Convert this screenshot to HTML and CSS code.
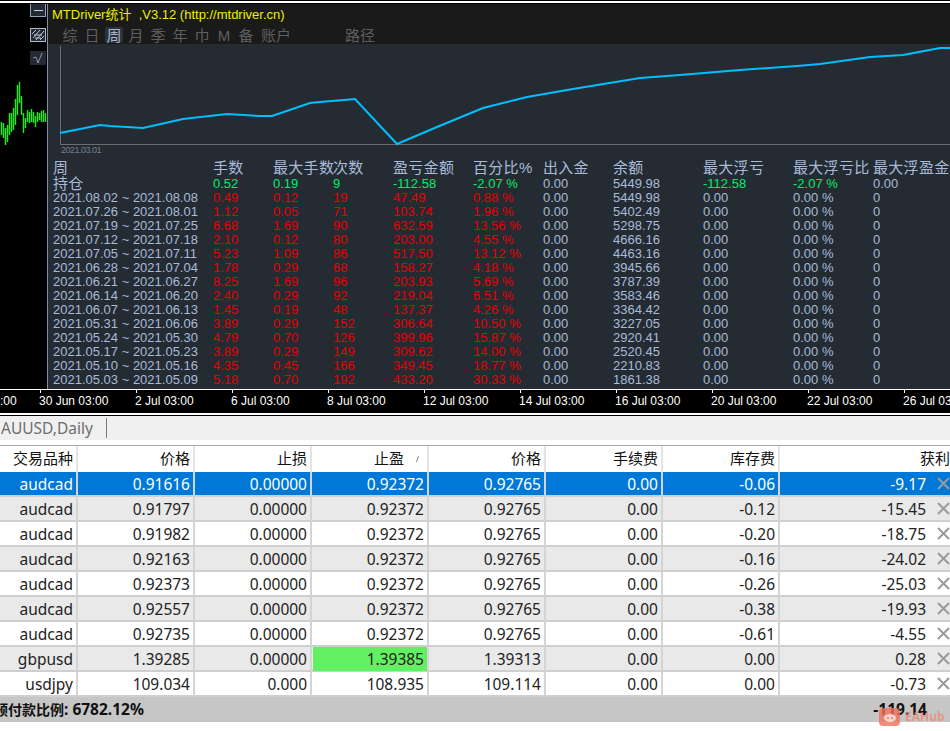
FILE: index.html
```html
<!DOCTYPE html>
<html>
<head lang="en">
    <meta charset="UTF-8">
    <title>MTDriver</title>
    <link rel="stylesheet" href="styles.css">
</head>
<body>
<div class="top-rule"></div>
<div class="terminal">
    <div class="side">
        <div class="side-btn side-min"><span></span></div>
        <div class="side-btn side-hatch">
            <svg width="14" height="12" viewBox="0 0 14 12"><path d="M2 9 9 1M5 11 13 2M1 5 5 1M9 11 13 7M3 6 11 6M4 9 10 9" stroke="#c4ccd6" stroke-width="1" fill="none"/></svg>
        </div>
        <div class="side-btn side-check">
            <svg width="12" height="12" viewBox="0 0 12 12"><path d="M1 6 4 5 6 11 10 1" stroke="#8a93a0" stroke-width="1" fill="none"/></svg>
        </div>
        <svg class="spark" width="47" height="70" viewBox="0 0 47 70">
            <path d="M1.5 40V53M3.5 41V56M5.5 46V63M7.5 43V60M9.5 31V53M11.5 31V50M13.5 26V48M15.5 17V43M17.5 3V33M19.5 0V21M21.5 14V33M23.5 31V51M25.5 36V46M27.5 28V40M29.5 30V41M31.5 27V40M33.5 30V41M35.5 34V45M37.5 30V40M39.5 31V38M41.5 29V40M43.5 28V40M45.5 31V40" stroke="#00ff00" stroke-width="1.4" fill="none"/>
        </svg>
    </div>
    <div class="panel">
        <div class="panel-head">
            <div class="panel-title">MTDriver统计 &nbsp;,V3.12 (http://mtdriver.cn)</div>
            <div class="tabs">
                <span class="tab">综</span>
                <span class="tab">日</span>
                <span class="tab tab-on">周</span>
                <span class="tab">月</span>
                <span class="tab">季</span>
                <span class="tab">年</span>
                <span class="tab">巾</span>
                <span class="tab">M</span>
                <span class="tab">备</span>
                <span class="tab tab-wide">账户</span>
                <span class="tab tab-wide tab-path">路径</span>
            </div>
        </div>
        <div class="plot">
            <svg width="902" height="113" viewBox="0 0 902 113">
                <path d="M12.5 2V100.5H902" stroke="#6e6e6e" stroke-width="1" fill="none"/>
                <path d="M12 89 52 81 62 82 95 84 135 75 179 70 212 72 224 72 262 59 272 58 307 55 349 100 389 83 435 64 479 53 525 45 592 34 632 31 692 26 749 22 772 20 822 13 855 11 892 4 902 4" stroke="#00bfff" stroke-width="2" fill="none"/>
            </svg>
            <div class="plot-date">2021.03.01</div>
        </div>
        <div class="stats" id="stats"></div>
    </div>
</div>
<div class="axis">
    <span class="axis-label axis-first">:00</span>
    <span class="axis-label">30 Jun 03:00</span>
    <span class="axis-label">2 Jul 03:00</span>
    <span class="axis-label">6 Jul 03:00</span>
    <span class="axis-label">8 Jul 03:00</span>
    <span class="axis-label">12 Jul 03:00</span>
    <span class="axis-label">14 Jul 03:00</span>
    <span class="axis-label">16 Jul 03:00</span>
    <span class="axis-label">20 Jul 03:00</span>
    <span class="axis-label">22 Jul 03:00</span>
    <span class="axis-label">26 Jul 03:00</span>
</div>
<div class="black-rule"></div>
<div class="chart-tabs"><span class="chart-tab">AUUSD,Daily</span></div>
<div class="orders" id="orders"></div>
<div class="summary">
    <span class="summary-left"><span class="summary-cjk">预付款比例</span>: 6782.12%</span>
    <span class="summary-right">-119.14</span>
    <span class="watermark">
        <svg width="21" height="18" viewBox="0 0 21 18"><rect width="21" height="18" rx="4" fill="#f0705a" opacity="0.8"/><ellipse cx="11" cy="10" rx="6" ry="4" fill="#fbd5cc"/><circle cx="9" cy="10" r="1" fill="#f0705a"/><circle cx="13" cy="10" r="1" fill="#f0705a"/></svg>
        <b class="mark-text">EAHub</b>
    </span>
</div>
<script>
    var stats = [
        ["2021.08.02 ~ 2021.08.08","0.49","0.12","19","47.49","0.88 %","0.00","5449.98","0.00","0.00 %","0"],
        ["2021.07.26 ~ 2021.08.01","1.12","0.05","71","103.74","1.96 %","0.00","5402.49","0.00","0.00 %","0"],
        ["2021.07.19 ~ 2021.07.25","6.68","1.69","90","632.59","13.56 %","0.00","5298.75","0.00","0.00 %","0"],
        ["2021.07.12 ~ 2021.07.18","2.10","0.12","80","203.00","4.55 %","0.00","4666.16","0.00","0.00 %","0"],
        ["2021.07.05 ~ 2021.07.11","5.23","1.09","86","517.50","13.12 %","0.00","4463.16","0.00","0.00 %","0"],
        ["2021.06.28 ~ 2021.07.04","1.78","0.29","68","158.27","4.18 %","0.00","3945.66","0.00","0.00 %","0"],
        ["2021.06.21 ~ 2021.06.27","8.25","1.69","96","203.93","5.69 %","0.00","3787.39","0.00","0.00 %","0"],
        ["2021.06.14 ~ 2021.06.20","2.40","0.29","92","219.04","6.51 %","0.00","3583.46","0.00","0.00 %","0"],
        ["2021.06.07 ~ 2021.06.13","1.45","0.19","48","137.37","4.26 %","0.00","3364.42","0.00","0.00 %","0"],
        ["2021.05.31 ~ 2021.06.06","3.89","0.29","152","306.64","10.50 %","0.00","3227.05","0.00","0.00 %","0"],
        ["2021.05.24 ~ 2021.05.30","4.79","0.70","126","399.96","15.87 %","0.00","2920.41","0.00","0.00 %","0"],
        ["2021.05.17 ~ 2021.05.23","3.89","0.29","149","309.62","14.00 %","0.00","2520.45","0.00","0.00 %","0"],
        ["2021.05.10 ~ 2021.05.16","4.35","0.45","166","349.45","18.77 %","0.00","2210.83","0.00","0.00 %","0"],
        ["2021.05.03 ~ 2021.05.09","5.18","0.70","192","433.20","30.33 %","0.00","1861.38","0.00","0.00 %","0"],
        ["2021.04.26 ~ 2021.05.02","4.41","0.70","128","318.41","21.25 %","0.00","1428.18","0.00","0.00 %","0"]
    ];
    function row(cells, cls){
        var s = '<div class="stats-row ' + cls + '">';
        for(var i=0;i<cells.length;i++){
            var c = "";
            if(cls=="stats-body" && i>0 && i<6) c = "red";
            if(cls=="stats-open" && ((i>0 && i<6) || i==8 || i==9)) c = "green";
            s += '<span class="' + c + '">' + cells[i] + '</span>';
        }
        return s + '</div>';
    }
    var html = row(["周","手数","最大手数","次数","盈亏金额","百分比%","出入金","余额","最大浮亏","最大浮亏比","最大浮盈金额"],"stats-head");
    html += row(["持仓","0.52","0.19","9","-112.58","-2.07 %","0.00","5449.98","-112.58","-2.07 %","0.00"],"stats-open");
    for(var i=0;i<stats.length;i++) html += row(stats[i],"stats-body");
    document.getElementById("stats").innerHTML = html;

    var cols = ["交易品种","价格","止损","止盈","价格","手续费","库存费","获利"];
    var orders = [
        ["audcad","0.91616","0.00000","0.92372","0.92765","0.00","-0.06","-9.17"],
        ["audcad","0.91797","0.00000","0.92372","0.92765","0.00","-0.12","-15.45"],
        ["audcad","0.91982","0.00000","0.92372","0.92765","0.00","-0.20","-18.75"],
        ["audcad","0.92163","0.00000","0.92372","0.92765","0.00","-0.16","-24.02"],
        ["audcad","0.92373","0.00000","0.92372","0.92765","0.00","-0.26","-25.03"],
        ["audcad","0.92557","0.00000","0.92372","0.92765","0.00","-0.38","-19.93"],
        ["audcad","0.92735","0.00000","0.92372","0.92765","0.00","-0.61","-4.55"],
        ["gbpusd","1.39285","0.00000","1.39385","1.39313","0.00","0.00","0.28"],
        ["usdjpy","109.034","0.000","108.935","109.114","0.00","0.00","-0.73"]
    ];
    var x = '<svg class="x" width="13" height="13" viewBox="0 0 13 13"><path d="M1 1 12 12M12 1 1 12" stroke="#9a9a9a" stroke-width="2" fill="none"/></svg>';
    var t = '<div class="orders-row orders-head">';
    for(var i=0;i<cols.length;i++){
        t += '<div class="cell' + (i==3 ? ' cell-sorted' : '') + '">' + cols[i] + (i==3 ? '<i class="sort"></i>' : '') + '</div>';
    }
    t += '</div>';
    for(var r=0;r<orders.length;r++){
        var cls = r==0 ? "row-on" : (r%2 ? "row-alt" : "");
        t += '<div class="orders-row ' + cls + '">';
        for(var i=0;i<8;i++){
            var c = (r==7 && i==3) ? "cell hit" : "cell";
            t += '<div class="' + c + '">' + orders[r][i] + (i==7 ? x : '') + '</div>';
        }
        t += '</div>';
    }
    document.getElementById("orders").innerHTML = t;
</script>
</body>
</html>
```
FILE: styles.css
```css
* {
    box-sizing: border-box;
}
html, body {
    margin: 0;
    padding: 0;
    width: 950px;
    height: 731px;
    overflow: hidden;
    background: #ffffff;
    font-family: "Liberation Sans", "Noto Sans CJK SC", sans-serif;
}
.top-rule {
    height: 4px;
    background: #ffffff;
    border-top: 1px solid #000000;
    border-bottom: 1px solid #000000;
}
.terminal {
    display: flex;
    height: 385px;
    background: #000000;
}
.side {
    width: 47px;
    flex: none;
    position: relative;
    display: flex;
    flex-direction: column;
    align-items: flex-end;
}
.side-btn {
    width: 16px;
    height: 14px;
    margin-right: 1px;
    display: flex;
    align-items: center;
    justify-content: center;
    background: #232a33;
}
.side-min {
    height: 13px;
    border: 1px solid #8fa0b8;
    border-top: none;
    margin-bottom: 11px;
}
.side-min span {
    width: 9px;
    height: 1px;
    background: #c4ccd6;
}
.side-hatch {
    border: 1px solid #aebacb;
    margin-bottom: 9px;
}
.spark {
    position: absolute;
    left: 0;
    top: 78px;
}
.panel {
    flex: 1;
    min-width: 0;
    height: 385px;
    overflow: hidden;
    background: #242b33;
    border-left: 1px solid #7d8ea6;
}
.panel-head {
    height: 40px;
    background: #1a1a1a;
    padding-left: 4px;
}
.panel-title {
    height: 20px;
    line-height: 22px;
    font-size: 13px;
    color: #eeee00;
    white-space: nowrap;
}
.tabs {
    display: flex;
    height: 20px;
    padding-left: 7px;
}
.tab {
    width: 22px;
    height: 16px;
    line-height: 17px;
    margin-top: 3px;
    text-align: center;
    font-size: 15px;
    color: #5e5e5e;
    border-radius: 2px;
}
.tab-on {
    width: 18px;
    margin: 3px 2px 0;
    color: #a9b6c8;
    background: #2a323c;
}
.tab-wide {
    width: 30px;
    margin-left: 4px;
}
.tab-path {
    margin-left: 54px;
}
.plot {
    height: 114px;
    position: relative;
}
.plot svg {
    display: block;
}
.plot-date {
    position: absolute;
    left: 13px;
    top: 101px;
    font-size: 9px;
    letter-spacing: -0.5px;
    line-height: 11px;
    color: #76808c;
}
.stats {
    padding: 2px 0 0 5px;
}
.stats-row {
    display: grid;
    grid-template-columns: 160px 60px 60px 60px 80px 70px 70px 90px 90px 80px 80px;
    height: 14px;
    line-height: 14px;
    font-size: 13px;
    color: #a8bbd8;
    white-space: nowrap;
}
.stats-head {
    height: 17px;
    line-height: 16px;
    font-size: 15px;
    letter-spacing: 0.3px;
}
.stats-open span:first-child {
    font-size: 15px;
    letter-spacing: 0.3px;
}
.red {
    color: #e60000;
}
.green {
    color: #00ee66;
}
.axis {
    height: 24px;
    background: #000000;
    border-top: 1px solid #ffffff;
    display: flex;
    color: #ffffff;
    font-size: 12px;
    line-height: 23px;
    white-space: nowrap;
    overflow: hidden;
}
.axis-label {
    width: 96px;
    flex: none;
    position: relative;
}
.axis-label::before {
    content: "";
    position: absolute;
    left: 1px;
    top: 0;
    width: 1px;
    height: 3px;
    background: #ffffff;
}
.axis-first {
    width: 39px;
}
.axis-first::before {
    display: none;
}
.black-rule {
    height: 3px;
    background: #ffffff;
    border-bottom: 1px solid #000000;
}
.chart-tabs {
    height: 24px;
    background: #f0f0f0;
    padding-left: 1px;
    display: flex;
    align-items: center;
}
.chart-tab {
    font-family: "Noto Sans", "Noto Sans CJK SC", sans-serif;
    font-size: 15.5px;
    color: #6e6e6e;
    padding-right: 13px;
    border-right: 1px solid #7a7a7a;
    line-height: 20px;
}
.orders {
    margin-top: 5px;
    border-top: 1px solid #a9a9a9;
    font-family: "Noto Sans", "Noto Sans CJK SC", sans-serif;
    font-size: 15.5px;
    color: #222222;
}
.orders-row {
    display: grid;
    grid-template-columns: 78px repeat(6, 117px) 170px;
    height: 25px;
    line-height: 24px;
    border-bottom: 2px solid #cfcfcf;
}
.orders-head {
    height: 26px;
    border-bottom: none;
    font-size: 15px;
}
.cell {
    text-align: right;
    padding-right: 3px;
    border-right: 2px solid #d4d4d4;
    position: relative;
    white-space: nowrap;
}
.cell:last-child {
    border-right: none;
    padding-right: 24px;
}
.orders-head .cell {
    border-right-color: #e4e4e4;
    color: #111111;
}
.orders-head .cell:last-child {
    padding-right: 0;
}
.orders-head .cell-sorted {
    padding-right: 23px;
}
.row-on {
    background: #0078d7;
    color: #ffffff;
}
.row-alt {
    background: #e9e9e9;
}
.hit {
    background: #62f062;
    background-clip: padding-box;
    margin-left: 1px;
}
.sort {
    position: absolute;
    right: 9px;
    top: 10px;
    width: 1px;
    height: 6px;
    background: #888888;
    transform: rotate(20deg);
}
.x {
    position: absolute;
    right: 0;
    top: 5px;
}
.summary {
    height: 25px;
    background: #c6c6c6;
    position: relative;
    display: flex;
    justify-content: space-between;
    font-family: "Noto Sans", "Noto Sans CJK SC", sans-serif;
    font-size: 15.5px;
    font-weight: 700;
    line-height: 24px;
    color: #111111;
    white-space: nowrap;
}
.summary-left {
    margin-left: -6px;
}
.summary-cjk {
    font-size: 14px;
}
.summary-right {
    margin-right: 23px;
}
.watermark {
    position: absolute;
    left: 879px;
    top: 11px;
    display: flex;
    align-items: center;
    gap: 5px;
    line-height: 18px;
}
.mark-text {
    font-size: 12px;
    font-weight: 700;
    color: #f0806a;
    opacity: 0.65;
}
```
